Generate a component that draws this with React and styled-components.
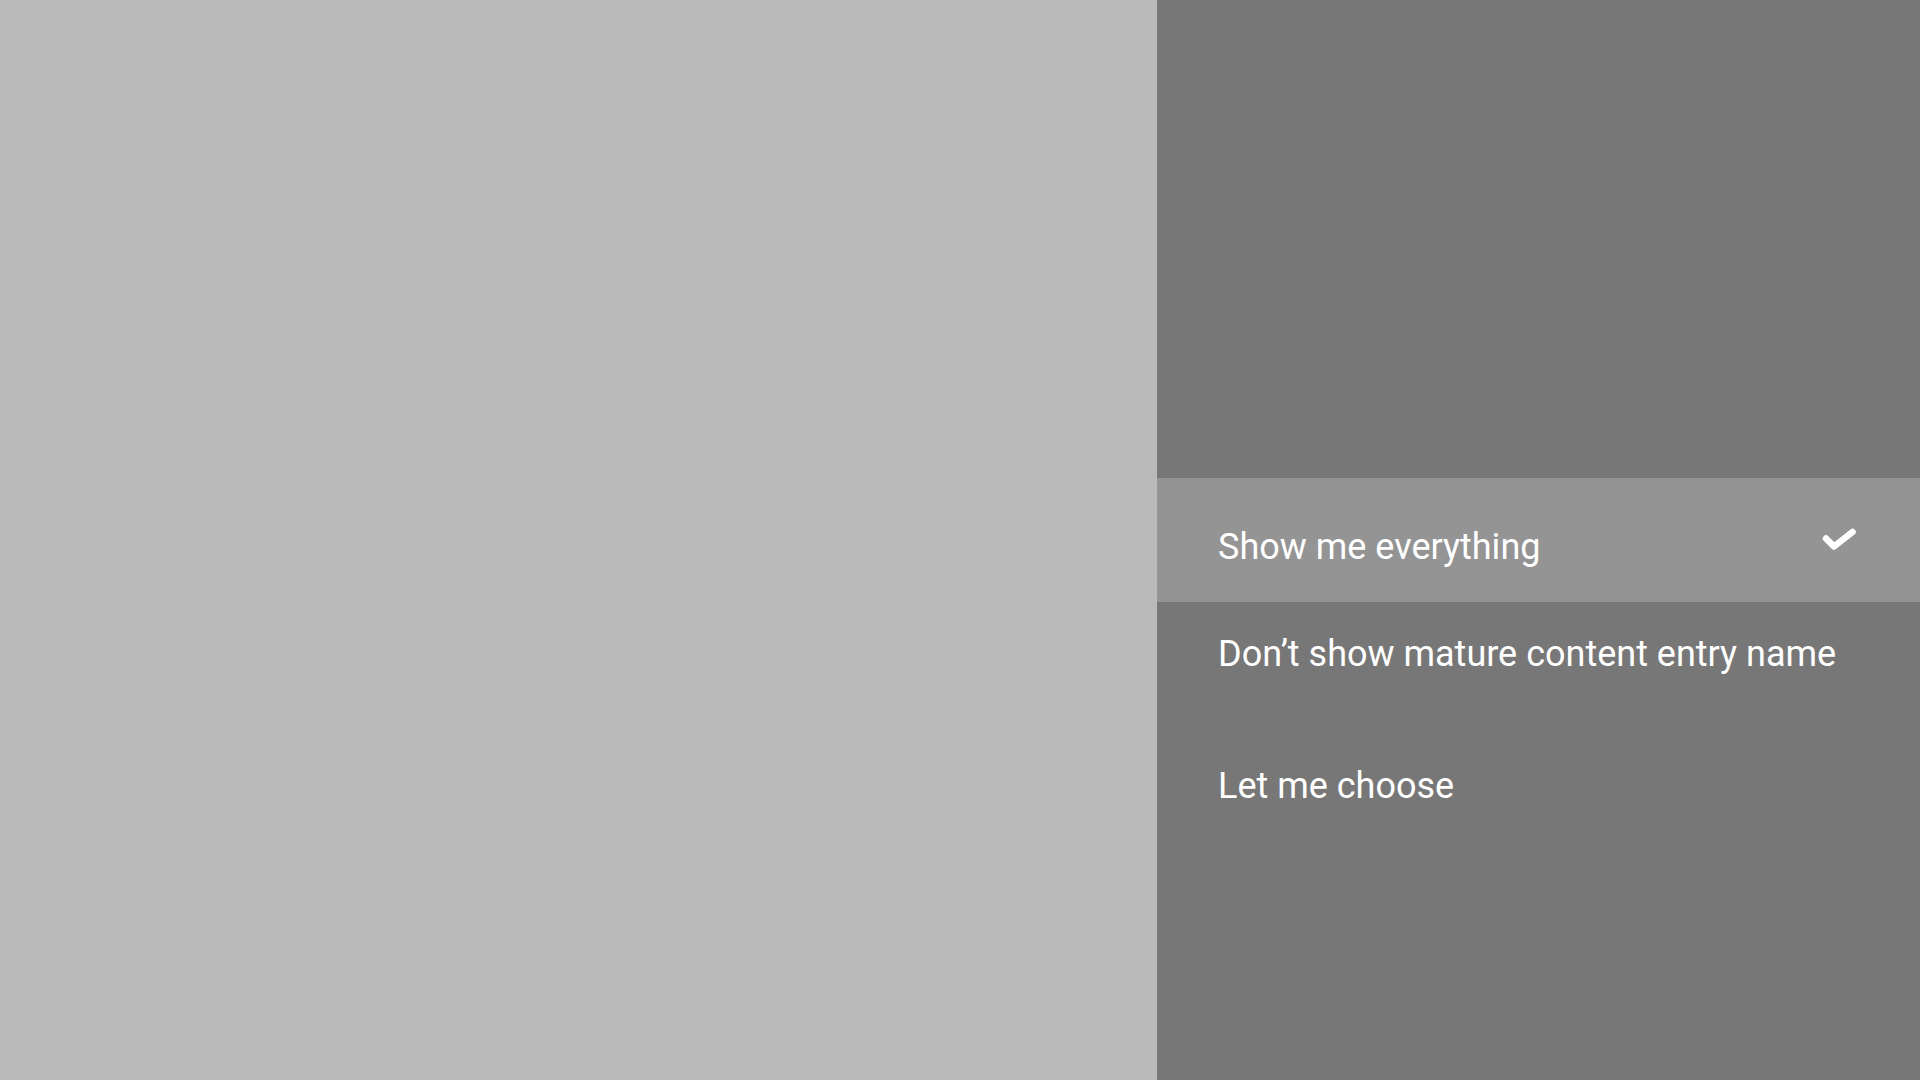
import React from "react";
import styled, { createGlobalStyle } from "styled-components";

const Global = createGlobalStyle`
  html, body { margin: 0; padding: 0; }
  body { font-family: Roboto, "Noto Sans", sans-serif; }
`;

const Screen = styled.div`
  display: flex;
  width: 1920px;
  height: 1080px;
  overflow: hidden;
`;

const Preview = styled.div`
  width: 1157px;
  flex: none;
  background: #bababa;
`;

const Panel = styled.div`
  flex: 1;
  background: #777777;
  display: flex;
  flex-direction: column;
  padding-top: 478px;
`;

const Option = styled.div`
  display: flex;
  align-items: flex-start;
  justify-content: space-between;
  box-sizing: border-box;
  height: ${(p) => p.$height}px;
  padding: ${(p) => p.$top}px 63px 0 61px;
  background: ${(p) => (p.$selected ? "#949494" : "transparent")};
`;

const Label = styled.span`
  font-family: Roboto, "Noto Sans", sans-serif;
  font-size: 36px;
  font-weight: 400;
  line-height: 42px;
  color: #ffffff;
  white-space: nowrap;
`;

const Check = styled.svg`
  width: 36px;
  height: 28px;
  margin-top: 1px;
  flex: none;
`;

const options = [
  { label: "Show me everything", selected: true, top: 48, height: 124 },
  { label: "Don\u2019t show mature content entry name", top: 31, height: 131 },
  { label: "Let me choose", top: 32, height: 120 },
];

export default function App() {
  return (
    <>
      <Global />
      <Screen>
        <Preview />
        <Panel>
          {options.map((o) => (
            <Option key={o.label} $selected={o.selected} $top={o.top} $height={o.height}>
              <Label>{o.label}</Label>
              {o.selected && (
                <Check viewBox="0 0 36 28">
                  <polyline
                    points="5,11.5 13,19.5 31.5,5"
                    fill="none"
                    stroke="#ffffff"
                    strokeWidth="6.5"
                    strokeLinecap="round"
                    strokeLinejoin="round"
                  />
                </Check>
              )}
            </Option>
          ))}
        </Panel>
      </Screen>
    </>
  );
}
